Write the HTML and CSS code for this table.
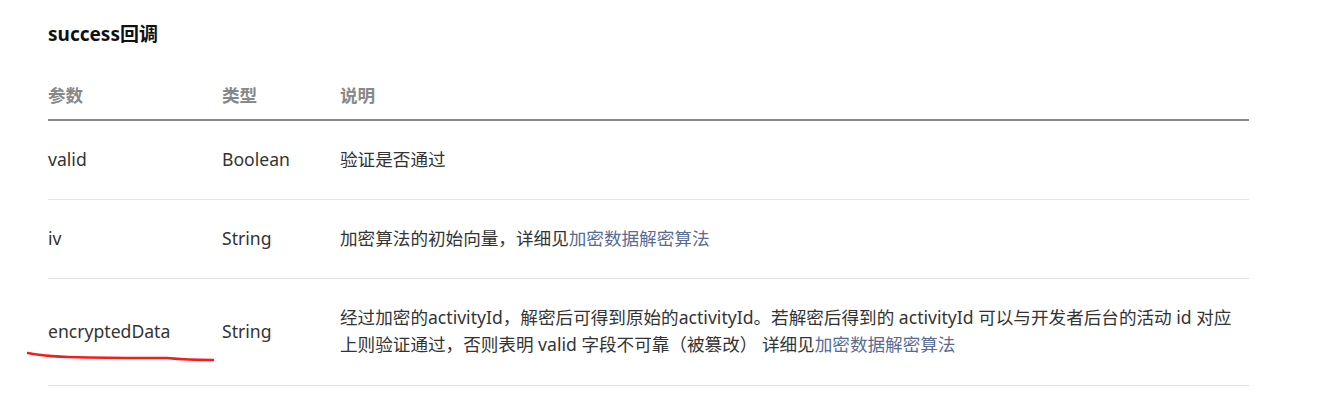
FILE: index.html
```html
<!DOCTYPE html>
<html lang="zh-CN">
<head>
    <meta charset="UTF-8">
    <title>success回调</title>
    <link rel="stylesheet" href="styles.css">
</head>
<body>
    <div class="doc">
        <h3 class="doc-title">success回调</h3>
        <table class="params">
            <thead>
                <tr>
                    <th class="col-name">参数</th>
                    <th class="col-type">类型</th>
                    <th>说明</th>
                </tr>
            </thead>
            <tbody>
                <tr>
                    <td>valid</td>
                    <td>Boolean</td>
                    <td>验证是否通过</td>
                </tr>
                <tr>
                    <td>iv</td>
                    <td>String</td>
                    <td>加密算法的初始向量，详细见<a href="#">加密数据解密算法</a></td>
                </tr>
                <tr class="last">
                    <td class="marked">encryptedData
                        <svg class="scribble" width="200" height="20" viewBox="0 0 200 20">
                            <path d="M1 5 Q 20 9 60 9.5 T 140 10 Q 160 12 186 12" />
                        </svg>
                    </td>
                    <td>String</td>
                    <td>经过加密的activityId，解密后可得到原始的activityId。若解密后得到的 activityId 可以与开发者后台的活动 id 对应<br>上则验证通过，否则表明 valid 字段不可靠（被篡改） 详细见<a href="#">加密数据解密算法</a></td>
                </tr>
            </tbody>
        </table>
    </div>
</body>
</html>
```

FILE: styles.css
```css
body {
    margin: 0;
    background-color: #fff;
    font-family: "Noto Sans", "Noto Sans CJK SC", sans-serif;
    color: #333;
}
.doc {
    width: 1201px;
    padding: 20px 0 0 48px;
}
.doc-title {
    margin: 0;
    font-size: 19px;
    line-height: 28px;
    font-weight: bold;
    color: #111;
}
.params {
    width: 100%;
    margin-top: 33px;
    border-collapse: collapse;
    font-size: 17.6px;
}
.params th {
    text-align: left;
    font-weight: bold;
    color: #888;
    padding: 0 0 10px 0;
    line-height: 28px;
    border-bottom: 2px solid #888;
}
.col-name {
    width: 174px;
}
.col-type {
    width: 118px;
}
.params td {
    padding: 25px 0 26px 0;
    line-height: 27px;
    border-bottom: 1px solid #e5e5e5;
    vertical-align: middle;
}
.params .last td {
    padding-bottom: 27px;
}
.params a {
    color: #576b95;
    text-decoration: none;
}
.marked {
    position: relative;
}
.scribble {
    position: absolute;
    left: -21px;
    top: 69px;
}
.scribble path {
    fill: none;
    stroke: #f21d1d;
    stroke-width: 2.6;
    stroke-linecap: round;
}
```
